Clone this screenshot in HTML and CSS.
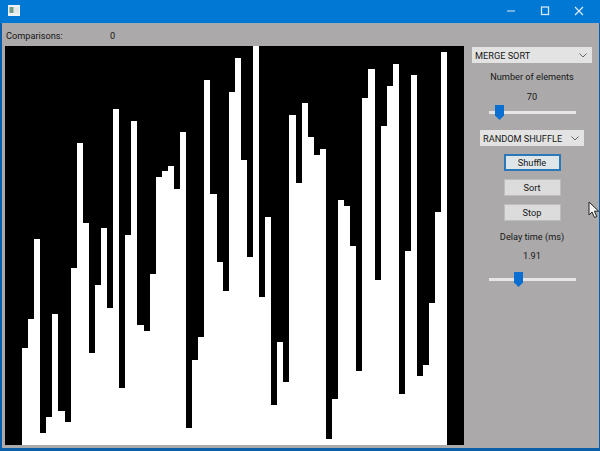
FILE: index.html
```html
<!DOCTYPE html>
<html lang="en">
<head>
<meta charset="utf-8">
<title>Sorting visualizer</title>
<link rel="stylesheet" href="styles.css">
</head>
<body>
<div class="window">
  <header class="titlebar">
    <svg class="app-icon" width="12" height="11" viewBox="0 0 12 11"><rect width="12" height="11" fill="#eef1f4"/><rect x="1.500" y="2" width="4" height="6" fill="#6f9a88"/><rect x="6" y="2" width="5" height="6" fill="#e2e6ea"/></svg>
    <div class="controls">
      <svg class="ctl" width="34" height="22" viewBox="0 0 34 22"><path d="M13 11h8" stroke="#bcd8f2" stroke-width="1.200"/></svg>
      <svg class="ctl" width="34" height="22" viewBox="0 0 34 22"><rect x="13.500" y="7" width="7" height="7.500" fill="none" stroke="#d5e6f7" stroke-width="1.300"/></svg>
      <svg class="ctl" width="34" height="22" viewBox="0 0 34 22"><path d="M13 7l8 8M21 7l-8 8" stroke="#e4effa" stroke-width="1.100"/></svg>
    </div>
  </header>
  <div class="client">
    <div class="stats"><span class="stats-label">Comparisons:</span><span>0</span></div>
    <div class="main">
      <div class="canvas">
        <div class="bar" style="height:97px"></div><div class="bar" style="height:126px"></div><div class="bar" style="height:206px"></div><div class="bar" style="height:12px"></div><div class="bar" style="height:28px"></div><div class="bar" style="height:131px"></div><div class="bar" style="height:34px"></div><div class="bar" style="height:23px"></div><div class="bar" style="height:177px"></div><div class="bar" style="height:302px"></div>
        <div class="bar" style="height:222px"></div><div class="bar" style="height:92px"></div><div class="bar" style="height:160px"></div><div class="bar" style="height:217px"></div><div class="bar" style="height:137px"></div><div class="bar" style="height:336px"></div><div class="bar" style="height:57px"></div><div class="bar" style="height:210px"></div><div class="bar" style="height:324px"></div><div class="bar" style="height:120px"></div>
        <div class="bar" style="height:114px"></div><div class="bar" style="height:171px"></div><div class="bar" style="height:268px"></div><div class="bar" style="height:274px"></div><div class="bar" style="height:279px"></div><div class="bar" style="height:256px"></div><div class="bar" style="height:313px"></div><div class="bar" style="height:17px"></div><div class="bar" style="height:85px"></div><div class="bar" style="height:108px"></div>
        <div class="bar" style="height:365px"></div><div class="bar" style="height:251px"></div><div class="bar" style="height:183px"></div><div class="bar" style="height:154px"></div><div class="bar" style="height:353px"></div><div class="bar" style="height:387px"></div><div class="bar" style="height:285px"></div><div class="bar" style="height:188px"></div><div class="bar" style="height:399px"></div><div class="bar" style="height:148px"></div>
        <div class="bar" style="height:228px"></div><div class="bar" style="height:40px"></div><div class="bar" style="height:103px"></div><div class="bar" style="height:63px"></div><div class="bar" style="height:330px"></div><div class="bar" style="height:262px"></div><div class="bar" style="height:342px"></div><div class="bar" style="height:308px"></div><div class="bar" style="height:290px"></div><div class="bar" style="height:296px"></div>
        <div class="bar" style="height:6px"></div><div class="bar" style="height:46px"></div><div class="bar" style="height:245px"></div><div class="bar" style="height:239px"></div><div class="bar" style="height:199px"></div><div class="bar" style="height:74px"></div><div class="bar" style="height:347px"></div><div class="bar" style="height:376px"></div><div class="bar" style="height:165px"></div><div class="bar" style="height:319px"></div>
        <div class="bar" style="height:359px"></div><div class="bar" style="height:381px"></div><div class="bar" style="height:51px"></div><div class="bar" style="height:194px"></div><div class="bar" style="height:370px"></div><div class="bar" style="height:69px"></div><div class="bar" style="height:80px"></div><div class="bar" style="height:142px"></div><div class="bar" style="height:233px"></div><div class="bar" style="height:393px"></div>
      </div>
      <aside class="panel">
        <div class="select select-wide"><span>MERGE SORT</span><svg width="8" height="5" viewBox="0 0 8 5"><path d="M.5 .5l3.500 3.500 3.500-3.500" fill="none" stroke="#666" stroke-width="1"/></svg></div>
        <div class="label label-first">Number of elements</div>
        <div class="label value">70</div>
        <div class="slider slider-count"><div class="track"></div><svg class="thumb" width="9" height="15" viewBox="0 0 9 15"><path d="M0 0h9v10.500l-4.500 4.500-4.500-4.500z" fill="#0a6fd0"/></svg></div>
        <div class="select select-narrow"><span>RANDOM SHUFFLE</span><svg width="8" height="5" viewBox="0 0 8 5"><path d="M.5 .5l3.500 3.500 3.500-3.500" fill="none" stroke="#666" stroke-width="1"/></svg></div>
        <button class="btn btn-focus">Shuffle</button>
        <button class="btn">Sort</button>
        <button class="btn">Stop</button>
        <div class="label label-delay">Delay time (ms)</div>
        <div class="label value-delay">1.91</div>
        <div class="slider slider-delay"><div class="track"></div><svg class="thumb" width="9" height="15" viewBox="0 0 9 15"><path d="M0 0h9v10.500l-4.500 4.500-4.500-4.500z" fill="#0a6fd0"/></svg></div>
      </aside>
    </div>
  </div>
  <svg class="cursor" width="13" height="18" viewBox="0 0 13 18"><path d="M1 1v13l3-3 2.500 5.500 2.300-1-2.400-5.300h4.300z" fill="#f4f4f4" stroke="#222" stroke-width="1"/></svg>
</div>
</body>
</html>
```

FILE: styles.css
```css
* { box-sizing: border-box; }
html, body { margin: 0; padding: 0; }
body { width: 600px; height: 451px; overflow: hidden; font-family: Roboto, "Noto Sans", sans-serif; font-size: 9.2px; color: #161616; }
.window { position: relative; width: 600px; height: 451px; background: #0b5fa8; padding: 0 1px 3px 2px; display: flex; flex-direction: column; }
.titlebar { height: 23px; margin: 0 -1px 0 -2px; padding: 0 4px 1px 8px; background: #0078d4; display: flex; align-items: center; justify-content: space-between; flex: none; }
.app-icon { display: block; margin-top: -2px; }
.controls { display: flex; }
.ctl { display: block; }
.client { flex: 1; background: #aba9aa; display: flex; flex-direction: column; min-height: 0; }
.stats { height: 23px; padding: 1px 0 0 4px; display: flex; align-items: center; flex: none; }
.stats-label { width: 104px; }
.main { display: flex; flex: 1; min-height: 0; padding-left: 3px; }
.canvas { width: 459px; height: 399px; background: #000; padding: 0 17px; display: flex; align-items: flex-end; flex: none; }
.bar { flex: 1; background: #fff; }
.panel { flex: 1; display: flex; flex-direction: column; align-items: center; padding-left: 1px; padding-top: 1px; }
.select { height: 16px; background: #e3e3e3; display: flex; align-items: center; justify-content: space-between; padding: 0 5px 0 3px; flex: none; white-space: nowrap; }
.select-wide { width: 120px; }
.select-narrow { width: 104px; margin-top: 10px; }
.label { line-height: 14px; text-align: center; }
.label-first { margin-top: 7px; }
.value { margin-top: 6px; }
.slider { position: relative; width: 87px; height: 15px; flex: none; }
.track { position: absolute; left: 0; right: 0; top: 6px; height: 3px; background: #e6e6e6; }
.thumb { position: absolute; top: 0; }
.slider-count { margin-top: 1px; margin-left: 1px; }
.slider-count .thumb { left: 6px; }
.slider-delay { margin-top: 9px; margin-left: 1px; }
.slider-delay .thumb { left: 25px; }
.btn { width: 57px; height: 17px; margin: 8px 0 0; padding: 0; background: #dcdcdc; border: 1px solid #bdbdbd; font: inherit; color: inherit; display: block; }
.btn-focus { background: #dfe6ea; border: 2px solid #2a78b8; }
.label-delay { margin-top: 9px; }
.value-delay { margin-top: 5px; }
.cursor { position: absolute; left: 588px; top: 201px; }
```
